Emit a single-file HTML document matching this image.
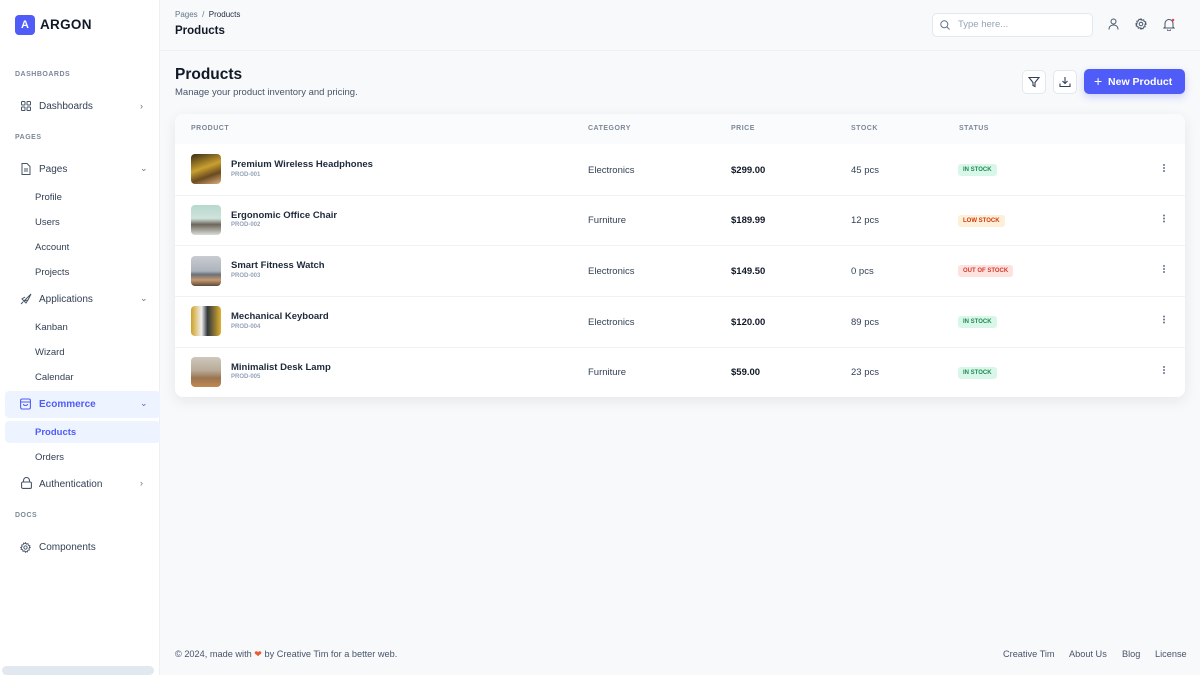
<!DOCTYPE html>
<html><head><meta charset="utf-8"><style>
*{box-sizing:border-box;margin:0;padding:0}
body{width:1200px;height:675px;overflow:hidden;background:#f8f9fb;font-family:"Liberation Sans",sans-serif;color:#1e293b;position:relative}
.a{position:absolute}
.side{left:0;top:0;width:160px;height:675px;background:#fff;border-right:1px solid #eef0f3}
.sec{font-size:7px;font-weight:bold;color:#7c8798;letter-spacing:.5px;left:15px}
.nav{left:39px;font-size:10px;color:#334155}
.sub{left:35px;font-size:9.5px;color:#334155}
.chev{left:140px;font-size:9px;color:#64748b}
.th{font-size:7px;font-weight:bold;color:#7c8798;letter-spacing:.5px;top:125px}
.row{left:175px;width:1010px;height:51px;border-top:1px solid #f0f2f5}
.cell{font-size:9.5px;color:#334155}
.thumb{left:191px;width:30px;height:30px;border-radius:4px}
.pn{left:231px;font-size:9.5px;font-weight:bold;color:#1e293b}
.pid{left:231px;font-size:6px;font-weight:bold;color:#94a3b8}
.badge{font-size:6px;font-weight:bold;padding:3px 5px;border-radius:3px;left:958px}
.ib{width:24px;height:24px;border:1px solid #e2e8f0;border-radius:5px;background:#fff;top:70px}
.foot{font-size:9.2px;color:#475569;top:649px}
svg{display:block}
</style></head><body>
<div class="a side"></div>
<div class="a" style="left:15px;top:15px;width:20px;height:20px;background:#4f5cf7;border-radius:4px;color:#fff;font-size:11px;font-weight:bold;text-align:center;line-height:20px">A</div>
<div class="a" style="left:40px;top:17px;font-size:13.5px;font-weight:bold;color:#111827;letter-spacing:.3px">ARGON</div>
<div class="a sec" style="top:71px">DASHBOARDS</div>
<svg class="a" style="left:21px;top:101px" width="10" height="10" viewBox="0 0 10 10" fill="none" stroke="#475569" stroke-width="1"><rect x=".5" y=".5" width="3.5" height="3.5" rx=".8"/><rect x="6" y=".5" width="3.5" height="3.5" rx=".8"/><rect x=".5" y="6" width="3.5" height="3.5" rx=".8"/><rect x="6" y="6" width="3.5" height="3.5" rx=".8"/></svg>
<div class="a nav" style="top:101px">Dashboards</div><div class="a chev" style="top:101px">›</div>
<div class="a sec" style="top:134px">PAGES</div>
<svg class="a" style="left:21px;top:163px" width="10" height="12" viewBox="0 0 10 12" fill="none" stroke="#475569" stroke-width="1"><path d="M1 .5h5l3 3v8H1z M3 6h4 M3 8h4"/></svg>
<div class="a nav" style="top:164px">Pages</div><div class="a chev" style="top:163px">⌄</div>
<div class="a sub" style="top:192px">Profile</div>
<div class="a sub" style="top:217px">Users</div>
<div class="a sub" style="top:242px">Account</div>
<div class="a sub" style="top:267px">Projects</div>
<svg class="a" style="left:20px;top:293px" width="12" height="12" viewBox="0 0 12 12" fill="none" stroke="#475569" stroke-width="1"><path d="M4 8 L11 1 L8 7 Z M4 8 L2 6 L5 4 M4 8 L6 10 L8 7 M1 11 L3 9"/></svg>
<div class="a nav" style="top:294px">Applications</div><div class="a chev" style="top:293px">⌄</div>
<div class="a sub" style="top:322px">Kanban</div>
<div class="a sub" style="top:347px">Wizard</div>
<div class="a sub" style="top:372px">Calendar</div>
<div class="a" style="left:5px;top:391px;width:155px;height:27px;background:#eef4ff;border-radius:4px"></div>
<svg class="a" style="left:20px;top:398px" width="11" height="12" viewBox="0 0 11 12" fill="none" stroke="#4f5cf7" stroke-width="1.1"><rect x=".6" y="1" width="9.8" height="10" rx="1.5"/><path d="M.6 4h9.8 M3.5 6c0 2 4 2 4 0"/></svg>
<div class="a nav" style="top:399px;color:#4f5cf7;font-weight:bold">Ecommerce</div><div class="a chev" style="top:398px;color:#4f5cf7">⌄</div>
<div class="a" style="left:5px;top:421px;width:155px;height:22px;background:#eef4ff;border-radius:4px"></div>
<div class="a sub" style="top:427px;color:#4f5cf7;font-weight:bold">Products</div>
<div class="a sub" style="top:452px">Orders</div>
<svg class="a" style="left:21px;top:477px" width="11" height="12" viewBox="0 0 11 12" fill="none" stroke="#475569" stroke-width="1.1"><rect x=".6" y="5" width="9.8" height="6.4" rx="1.2"/><path d="M2.5 5V3.5a3 3 0 0 1 6 0V5"/></svg>
<div class="a nav" style="top:479px">Authentication</div><div class="a chev" style="top:478px">›</div>
<div class="a sec" style="top:512px">DOCS</div>
<svg class="a" style="left:20px;top:542px" width="11" height="11" viewBox="0 0 12 12" fill="none" stroke="#475569" stroke-width="1"><circle cx="6" cy="6" r="1.8"/><path d="M6 .8l1 1.5 1.7-.5.4 1.7 1.7.5-.5 1.7L11.2 6l-1.5 1 .5 1.7-1.7.4-.5 1.7-1.7-.5L6 11.2l-1-1.5-1.7.5-.4-1.7-1.7-.5.5-1.7L.8 6l1.5-1-.5-1.7 1.7-.4.5-1.7 1.7.5z"/></svg>
<div class="a nav" style="top:542px">Components</div>
<div class="a" style="left:2px;top:666px;width:152px;height:9px;background:#e2e8f0;border-radius:5px"></div>

<div class="a" style="left:160px;top:0;width:1040px;height:51px;border-bottom:1px solid #eef0f3;background:#f8f9fb"></div>
<div class="a" style="left:175px;top:10px;font-size:8px;color:#64748b">Pages&nbsp; / &nbsp;<span style="color:#1e293b">Products</span></div>
<div class="a" style="left:175px;top:25px;font-size:11.5px;font-weight:bold;color:#111827">Products</div>
<div class="a" style="left:932px;top:13px;width:161px;height:24px;background:#fff;border:1px solid #e2e8f0;border-radius:5px"></div>
<svg class="a" style="left:940px;top:20px" width="10" height="10" viewBox="0 0 10 10" fill="none" stroke="#64748b" stroke-width="1"><circle cx="4.3" cy="4.3" r="3.5"/><path d="M7 7l2.5 2.5"/></svg>
<div class="a" style="left:958px;top:19px;font-size:9.5px;color:#94a3b8">Type here...</div>
<svg class="a" style="left:1108px;top:18px" width="11" height="12" viewBox="0 0 11 12" fill="none" stroke="#475569" stroke-width="1"><circle cx="5.5" cy="3.5" r="2.5"/><path d="M1 11.5c0-3 2-4.5 4.5-4.5S10 8.5 10 11.5"/></svg>
<svg class="a" style="left:1135px;top:18px" width="12" height="12" viewBox="0 0 12 12" fill="none" stroke="#475569" stroke-width="1"><circle cx="6" cy="6" r="1.8"/><path d="M6 .8l1 1.5 1.7-.5.4 1.7 1.7.5-.5 1.7L11.2 6l-1.5 1 .5 1.7-1.7.4-.5 1.7-1.7-.5L6 11.2l-1-1.5-1.7.5-.4-1.7-1.7-.5.5-1.7L.8 6l1.5-1-.5-1.7 1.7-.4.5-1.7 1.7.5z"/></svg>
<svg class="a" style="left:1163px;top:18px" width="12" height="13" viewBox="0 0 12 13" fill="none" stroke="#475569" stroke-width="1"><path d="M2 9V5.5a4 4 0 0 1 8 0V9l1 1H1z M4.5 11.5a1.5 1.5 0 0 0 3 0"/><circle cx="10" cy="2" r="1.3" fill="#ef4444" stroke="none"/></svg>

<div class="a" style="left:175px;top:66px;font-size:15.5px;font-weight:bold;color:#111827">Products</div>
<div class="a" style="left:175px;top:87px;font-size:9.5px;color:#475569">Manage your product inventory and pricing.</div>
<div class="a ib" style="left:1022px"></div>
<svg class="a" style="left:1028px;top:76px" width="12" height="12" viewBox="0 0 12 12" fill="none" stroke="#334155" stroke-width="1.1"><path d="M1 1.5h10L7 6.5v4L5 9.5v-3z"/></svg>
<div class="a ib" style="left:1053px"></div>
<svg class="a" style="left:1059px;top:76px" width="12" height="12" viewBox="0 0 12 12" fill="none" stroke="#334155" stroke-width="1.1"><path d="M6 1v6.5 M3.5 5L6 7.5 8.5 5 M1 7.5v3h10v-3"/></svg>
<div class="a" style="left:1084px;top:69px;width:101px;height:25px;background:#4f5cf7;border-radius:5px;box-shadow:0 3px 8px rgba(79,92,247,.25);color:#fff;font-size:10.5px;font-weight:bold;line-height:25px;padding-left:10px"><span style="font-size:14px;font-weight:normal;vertical-align:-1px">+</span>&nbsp; New Product</div>

<div class="a" style="left:175px;top:114px;width:1010px;height:283px;background:#fff;border-radius:8px;box-shadow:0 4px 14px rgba(15,23,42,.08);overflow:hidden">
<div style="height:30px;background:#fafbfc"></div></div>
<div class="a th" style="left:191px">PRODUCT</div>
<div class="a th" style="left:588px">CATEGORY</div>
<div class="a th" style="left:731px">PRICE</div>
<div class="a th" style="left:851px">STOCK</div>
<div class="a th" style="left:959px">STATUS</div>

<div class="a row" style="top:144px;border-top:none"></div>
<div class="a row" style="top:195px"></div>
<div class="a row" style="top:245px"></div>
<div class="a row" style="top:296px"></div>
<div class="a row" style="top:347px"></div>

<div class="a thumb" style="top:154px;background:linear-gradient(160deg,#3a2a12 0%,#c9a030 45%,#6a4a20 70%,#e0b080 100%)"></div>
<div class="a pn" style="top:159px">Premium Wireless Headphones</div><div class="a pid" style="top:172px">PROD-001</div>
<div class="a cell" style="left:588px;top:165px">Electronics</div><div class="a cell" style="left:731px;top:165px;font-weight:bold;color:#111827">$299.00</div><div class="a cell" style="left:851px;top:165px">45 pcs</div>
<div class="a badge" style="top:164px;background:#d9f7e8;color:#1f8a55">IN STOCK</div>

<div class="a thumb" style="top:205px;background:linear-gradient(180deg,#b7d8cc 0%,#cfe3dc 45%,#6d665a 65%,#d8dcd8 100%)"></div>
<div class="a pn" style="top:210px">Ergonomic Office Chair</div><div class="a pid" style="top:222px">PROD-002</div>
<div class="a cell" style="left:588px;top:215px">Furniture</div><div class="a cell" style="left:731px;top:215px;font-weight:bold;color:#111827">$189.99</div><div class="a cell" style="left:851px;top:215px">12 pcs</div>
<div class="a badge" style="top:215px;background:#fdefd8;color:#d4380d">LOW STOCK</div>

<div class="a thumb" style="top:256px;background:linear-gradient(180deg,#c8ccd2 0%,#aeb4bc 50%,#6a7078 62%,#c79a70 80%,#5a4a3a 100%)"></div>
<div class="a pn" style="top:260px">Smart Fitness Watch</div><div class="a pid" style="top:273px">PROD-003</div>
<div class="a cell" style="left:588px;top:266px">Electronics</div><div class="a cell" style="left:731px;top:266px;font-weight:bold;color:#111827">$149.50</div><div class="a cell" style="left:851px;top:266px">0 pcs</div>
<div class="a badge" style="top:265px;background:#fde2e0;color:#d63a2a">OUT OF STOCK</div>

<div class="a thumb" style="top:306px;background:linear-gradient(90deg,#d0a020 0%,#f0f0f0 35%,#30363c 55%,#e0b030 100%)"></div>
<div class="a pn" style="top:311px">Mechanical Keyboard</div><div class="a pid" style="top:324px">PROD-004</div>
<div class="a cell" style="left:588px;top:317px">Electronics</div><div class="a cell" style="left:731px;top:317px;font-weight:bold;color:#111827">$120.00</div><div class="a cell" style="left:851px;top:317px">89 pcs</div>
<div class="a badge" style="top:316px;background:#d9f7e8;color:#1f8a55">IN STOCK</div>

<div class="a thumb" style="top:357px;background:linear-gradient(180deg,#cfc7bc 0%,#b8ab98 45%,#9a7450 70%,#c08a50 100%)"></div>
<div class="a pn" style="top:362px">Minimalist Desk Lamp</div><div class="a pid" style="top:374px">PROD-005</div>
<div class="a cell" style="left:588px;top:367px">Furniture</div><div class="a cell" style="left:731px;top:367px;font-weight:bold;color:#111827">$59.00</div><div class="a cell" style="left:851px;top:367px">23 pcs</div>
<div class="a badge" style="top:367px;background:#d9f7e8;color:#1f8a55">IN STOCK</div>

<svg class="a" style="left:1162px;top:164px" width="4" height="220" viewBox="0 0 4 220" fill="#64748b">
<circle cx="2" cy="1" r="1"/><circle cx="2" cy="4" r="1"/><circle cx="2" cy="7" r="1"/>
<circle cx="2" cy="51.5" r="1"/><circle cx="2" cy="54.5" r="1"/><circle cx="2" cy="57.5" r="1"/>
<circle cx="2" cy="102" r="1"/><circle cx="2" cy="105" r="1"/><circle cx="2" cy="108" r="1"/>
<circle cx="2" cy="152.5" r="1"/><circle cx="2" cy="155.5" r="1"/><circle cx="2" cy="158.5" r="1"/>
<circle cx="2" cy="203" r="1"/><circle cx="2" cy="206" r="1"/><circle cx="2" cy="209" r="1"/></svg>

<div class="a foot" style="left:175px">© 2024, made with <span style="color:#ea5a2e">❤</span> by Creative Tim for a better web.</div>
<div class="a foot" style="left:1003px">Creative Tim</div>
<div class="a foot" style="left:1069px">About Us</div>
<div class="a foot" style="left:1122px">Blog</div>
<div class="a foot" style="left:1155px">License</div>
</body></html>
